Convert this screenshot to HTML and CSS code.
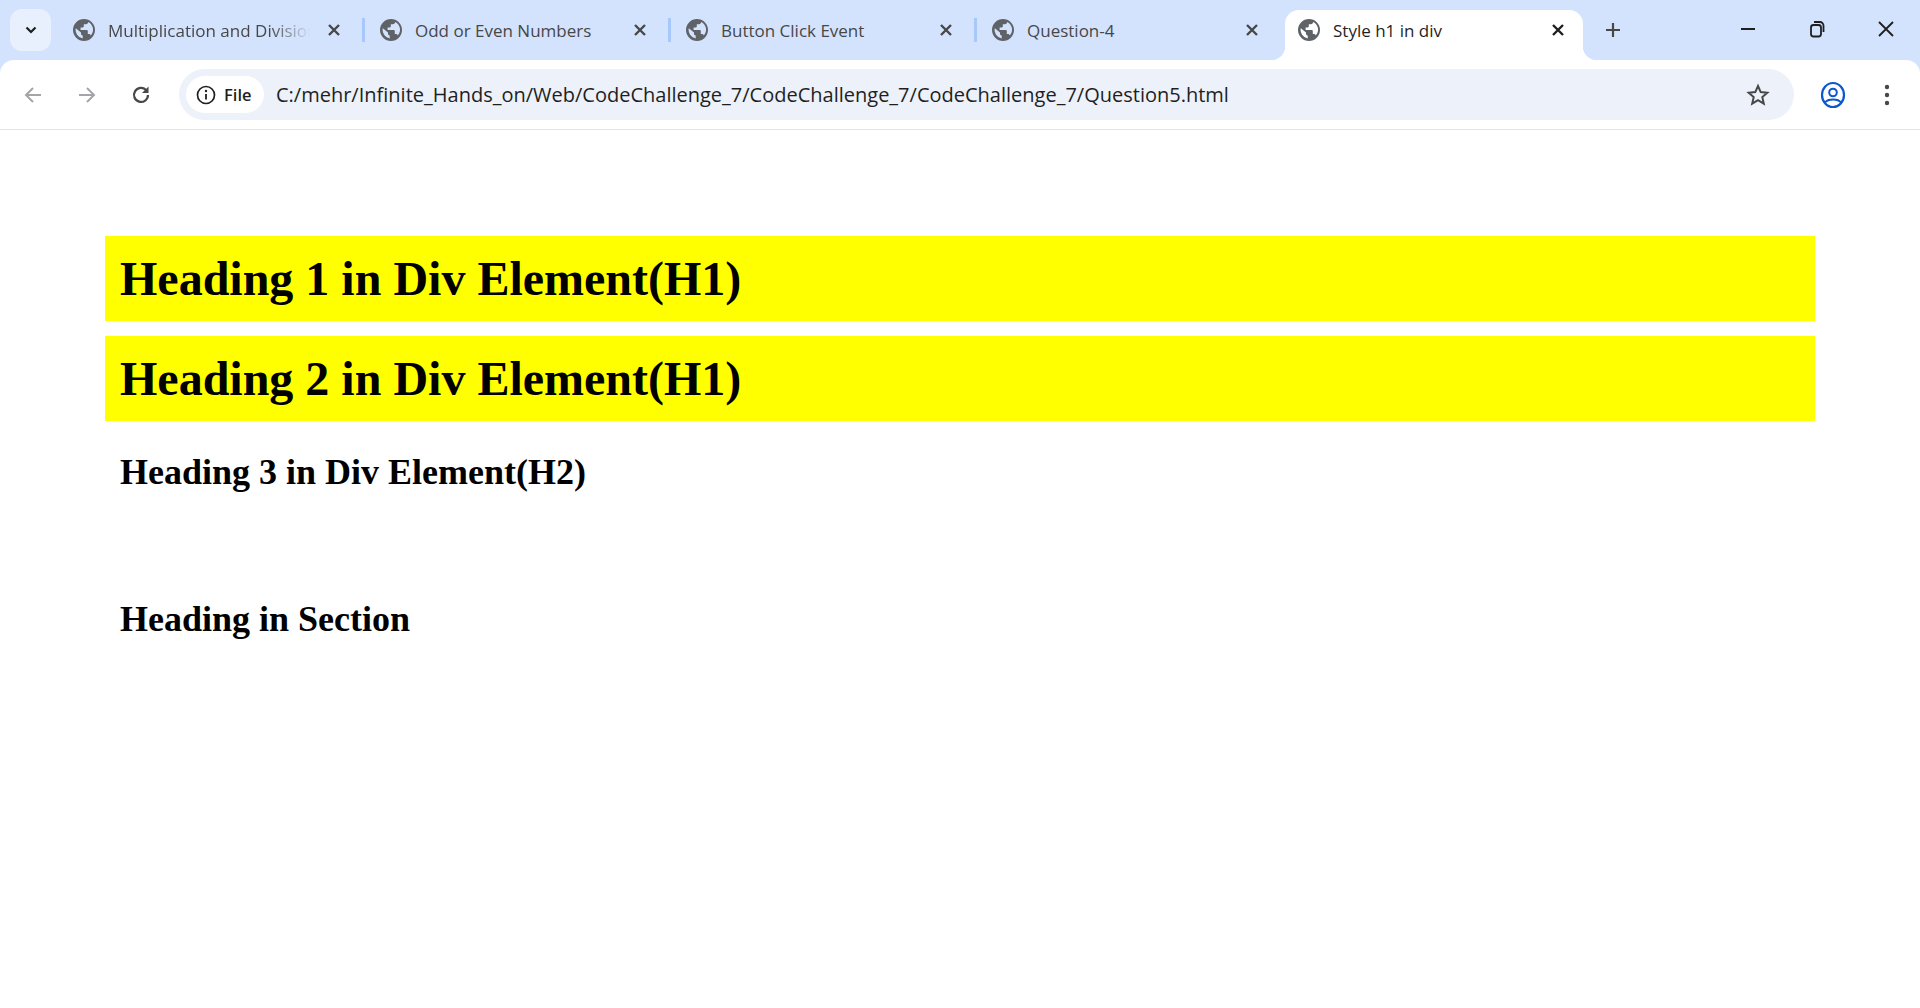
FILE: index.html
```html
<!DOCTYPE html>
<html lang="en">
<head>
<meta charset="utf-8">
<title>Style h1 in div</title>
<link rel="stylesheet" href="styles.css">
</head>
<body>
<svg class="defs" width="0" height="0" aria-hidden="true">
  <defs>
    <symbol id="globe" viewBox="0 0 24 24">
      <path fill="#5f6368" fill-rule="evenodd" d="M12 1a11 11 0 1 0 0 22 11 11 0 0 0 0-22zM3.800 10.200L9 14.500v1.300c0 1 .8 1.700 1.700 1.700v2.900a8.500 8.500 0 0 1-6.900-10.200zm15 7.200c-.4-.8-1.100-1.300-2-1.300h-1v-3c0-.6-.5-1.100-1.100-1.100H8.600V9.400h2.200c.6 0 1-.5 1-1.100V6.200H14c1.200 0 2.200-1 2.200-2.200a8.500 8.500 0 0 1 2.600 13.400z"/>
    </symbol>
    <symbol id="close" viewBox="0 0 16 16">
      <path d="M3 3l10 10M13 3L3 13" fill="none" stroke="currentColor" stroke-width="2.400"/>
    </symbol>
  </defs>
</svg>
<header class="browser">
  <div class="tabstrip">
    <button class="tab-search" type="button" aria-label="Search tabs">
      <svg width="14" height="14" viewBox="0 0 14 14"><path d="M2.500 4.500L7 9l4.500-4.500" fill="none" stroke="#1f1f1f" stroke-width="2.200"/></svg>
    </button>
    <div class="tab tab-first">
      <svg class="favicon"><use href="#globe"/></svg>
      <span class="tab-title tab-title-fade">Multiplication and Division</span>
      <svg class="tab-close"><use href="#close"/></svg>
    </div>
    <div class="tab">
      <svg class="favicon"><use href="#globe"/></svg>
      <span class="tab-title">Odd or Even Numbers</span>
      <svg class="tab-close"><use href="#close"/></svg>
    </div>
    <div class="tab">
      <svg class="favicon"><use href="#globe"/></svg>
      <span class="tab-title">Button Click Event</span>
      <svg class="tab-close"><use href="#close"/></svg>
    </div>
    <div class="tab tab-last">
      <svg class="favicon"><use href="#globe"/></svg>
      <span class="tab-title">Question-4</span>
      <svg class="tab-close"><use href="#close"/></svg>
    </div>
    <div class="tab tab-active">
      <svg class="favicon"><use href="#globe"/></svg>
      <span class="tab-title">Style h1 in div</span>
      <svg class="tab-close"><use href="#close"/></svg>
    </div>
    <button class="new-tab" type="button" aria-label="New tab">
      <svg width="18" height="18" viewBox="0 0 18 18"><path d="M9 2v14M2 9h14" fill="none" stroke="#474747" stroke-width="2.200"/></svg>
    </button>
    <div class="window-controls">
      <svg width="16" height="16" viewBox="0 0 16 16"><path d="M1 8h14" stroke="#1f1f1f" stroke-width="2"/></svg>
      <svg width="16" height="18" viewBox="0 0 16 18"><rect x="2" y="5" width="10" height="11.500" rx="2.500" fill="none" stroke="#1f1f1f" stroke-width="1.800"/><path d="M5 2h6a3.500 3.500 0 0 1 3.500 3.500V12" fill="none" stroke="#1f1f1f" stroke-width="1.800"/></svg>
      <svg width="18" height="18" viewBox="0 0 18 18"><path d="M2 2l14 14M16 2L2 16" stroke="#1f1f1f" stroke-width="1.800"/></svg>
    </div>
  </div>
  <div class="toolbar">
    <svg class="nav" width="22" height="22" viewBox="0 0 22 22"><path d="M19 11H4M11 4l-7 7 7 7" fill="none" stroke="#a3a5a8" stroke-width="2"/></svg>
    <svg class="nav" width="22" height="22" viewBox="0 0 22 22"><path d="M3 11h15M11 4l7 7-7 7" fill="none" stroke="#a3a5a8" stroke-width="2"/></svg>
    <svg class="nav" width="22" height="22" viewBox="0 0 22 22"><path d="M18 11a7 7 0 1 1-2-5" fill="none" stroke="#474747" stroke-width="2.200"/><path d="M18.500 2.500v6.500H12z" fill="#474747"/></svg>
    <div class="omnibox">
      <div class="chip">
        <svg width="20" height="20" viewBox="0 0 20 20"><circle cx="10" cy="10" r="8.500" fill="none" stroke="#1f1f1f" stroke-width="1.700"/><path d="M10 9v5.500" stroke="#1f1f1f" stroke-width="1.800"/><circle cx="10" cy="6" r="1.200" fill="#1f1f1f"/></svg>
        <span>File</span>
      </div>
      <span class="url">C:/mehr/Infinite_Hands_on/Web/CodeChallenge_7/CodeChallenge_7/CodeChallenge_7/Question5.html</span>
      <svg class="star" width="24" height="24" viewBox="0 0 24 24"><path d="M12 3l2.700 6.100 6.600.6-5 4.400 1.500 6.500-5.800-3.400-5.800 3.400 1.500-6.500-5-4.400 6.600-.6z" fill="none" stroke="#474747" stroke-width="2"/></svg>
    </div>
    <svg class="profile" width="26" height="28" viewBox="0 0 26 28"><ellipse cx="13" cy="14" rx="11" ry="12" fill="none" stroke="#0b57d0" stroke-width="2.200"/><circle cx="13" cy="11.500" r="3.800" fill="none" stroke="#0b57d0" stroke-width="2"/><path d="M5 21.500c3-4 13-4 16 0" fill="none" stroke="#0b57d0" stroke-width="2"/></svg>
    <svg class="menu" width="6" height="24" viewBox="0 0 6 24"><circle cx="3" cy="4" r="2.200" fill="#474747"/><circle cx="3" cy="12" r="2.200" fill="#474747"/><circle cx="3" cy="20" r="2.200" fill="#474747"/></svg>
  </div>
</header>
<main class="page">
  <div class="div-block">
    <h1 class="h-yellow">Heading 1 in Div Element(H1)</h1>
    <h1 class="h-yellow">Heading 2 in Div Element(H1)</h1>
    <h2 class="h-plain">Heading 3 in Div Element(H2)</h2>
  </div>
  <section class="section-block">
    <h2 class="h-plain">Heading in Section</h2>
  </section>
</main>
</body>
</html>
```
FILE: styles.css
```css
* { box-sizing: border-box; }
html, body { margin: 0; height: 100%; }
body { background: #fff; color: #000; overflow: hidden; font-family: "Liberation Serif", serif; }
.defs { position: absolute; }
button { border: 0; padding: 0; font: inherit; }

.browser { background: #d3e3fd; }
.tabstrip {
  height: 60px;
  display: flex;
  align-items: flex-end;
  padding-left: 10px;
  font-family: "Open Sans", sans-serif;
}
.tab-search {
  width: 41px;
  height: 42px;
  margin-bottom: 9px;
  margin-right: 8px;
  border-radius: 12px;
  background: #e9f0fd;
  display: flex;
  align-items: center;
  justify-content: center;
}
.tab {
  width: 306px;
  height: 50px;
  display: flex;
  align-items: center;
  padding: 0 22px 10px 13px;
  position: relative;
  color: #474747;
}
.tab-first { width: 307px; }
.tab-first .tab-close { margin-left: 16px; }
.tab::after {
  content: "";
  position: absolute;
  right: 1px;
  top: 8px;
  width: 3px;
  height: 24px;
  background: #a8c7fa;
}
.tab-last::after, .tab-active::after { display: none; }
.favicon { width: 24px; height: 24px; flex: none; margin-right: 12px; }
.tab-title { flex: 1; min-width: 0; font-size: 17px; white-space: nowrap; overflow: hidden; }
.tab-title-fade { -webkit-mask-image: linear-gradient(to right, #000 80%, transparent 100%); mask-image: linear-gradient(to right, #000 80%, transparent 100%); }
.tab-close { width: 16px; height: 16px; flex: none; margin: 0 2px 0 10px; color: #474747; }
.tab-active {
  width: 298px;
  margin-left: 1px;
  padding-left: 12px;
  background: #fff;
  border-radius: 14px 14px 0 0;
  color: #1f1f1f;
}
.tab-active .tab-close { color: #1f1f1f; margin-right: -5px; }
.tab-active::before,
.tab-active::after {
  content: "";
  display: block;
  position: absolute;
  bottom: 0;
  top: auto;
  width: 14px;
  height: 14px;
}
.tab-active::before { left: -14px; background: radial-gradient(circle at 0 0, transparent 14px, #fff 14.500px); }
.tab-active::after { right: -14px; background: radial-gradient(circle at 100% 0, transparent 14px, #fff 14.500px); }
.new-tab {
  width: 40px;
  height: 40px;
  margin: 0 0 10px 10px;
  background: transparent;
  display: flex;
  align-items: center;
  justify-content: center;
}
.window-controls {
  margin-left: auto;
  height: 60px;
  width: 180px;
  display: flex;
  align-items: center;
  justify-content: space-between;
  padding: 0 25px 2px 0;
}

.toolbar {
  height: 70px;
  background: #fff;
  border-bottom: 1px solid #e3e3e3;
  display: flex;
  align-items: center;
  padding: 0 0 0 22px;
  border-radius: 14px 14px 0 0;
}
.nav { flex: none; margin-right: 32px; }
.nav:nth-child(3) { margin-right: 27px; }
.omnibox {
  width: 1615px;
  height: 51px;
  border-radius: 26px;
  background: #ecf1fa;
  display: flex;
  align-items: center;
  padding: 0 24px 0 7px;
  font-family: "Open Sans", sans-serif;
}
.chip {
  height: 37px;
  width: 78px;
  background: #fff;
  border-radius: 19px;
  display: flex;
  align-items: center;
  gap: 8px;
  padding-left: 10px;
  font-size: 16.500px;
  font-weight: 600;
  color: #1f1f1f;
  flex: none;
}
.url { margin-left: 12px; flex: 1; font-size: 20px; color: #1f1f1f; white-space: nowrap; }
.star { flex: none; }
.profile { flex: none; margin-left: 26px; }
.menu { flex: none; margin-left: 38px; }

.page { padding: 106px 105px 0; }
.h-yellow {
  margin: 0 0 15px;
  padding: 20px 15px;
  background: #ff0;
  font-size: 48px;
  line-height: 45px;
  font-weight: 700;
}
.h-plain {
  margin: 0;
  padding: 0 15px;
  font-size: 36px;
  line-height: 42px;
  font-weight: 700;
}
.div-block .h-plain { margin-top: 30px; }
.section-block { padding-top: 105px; }
```
